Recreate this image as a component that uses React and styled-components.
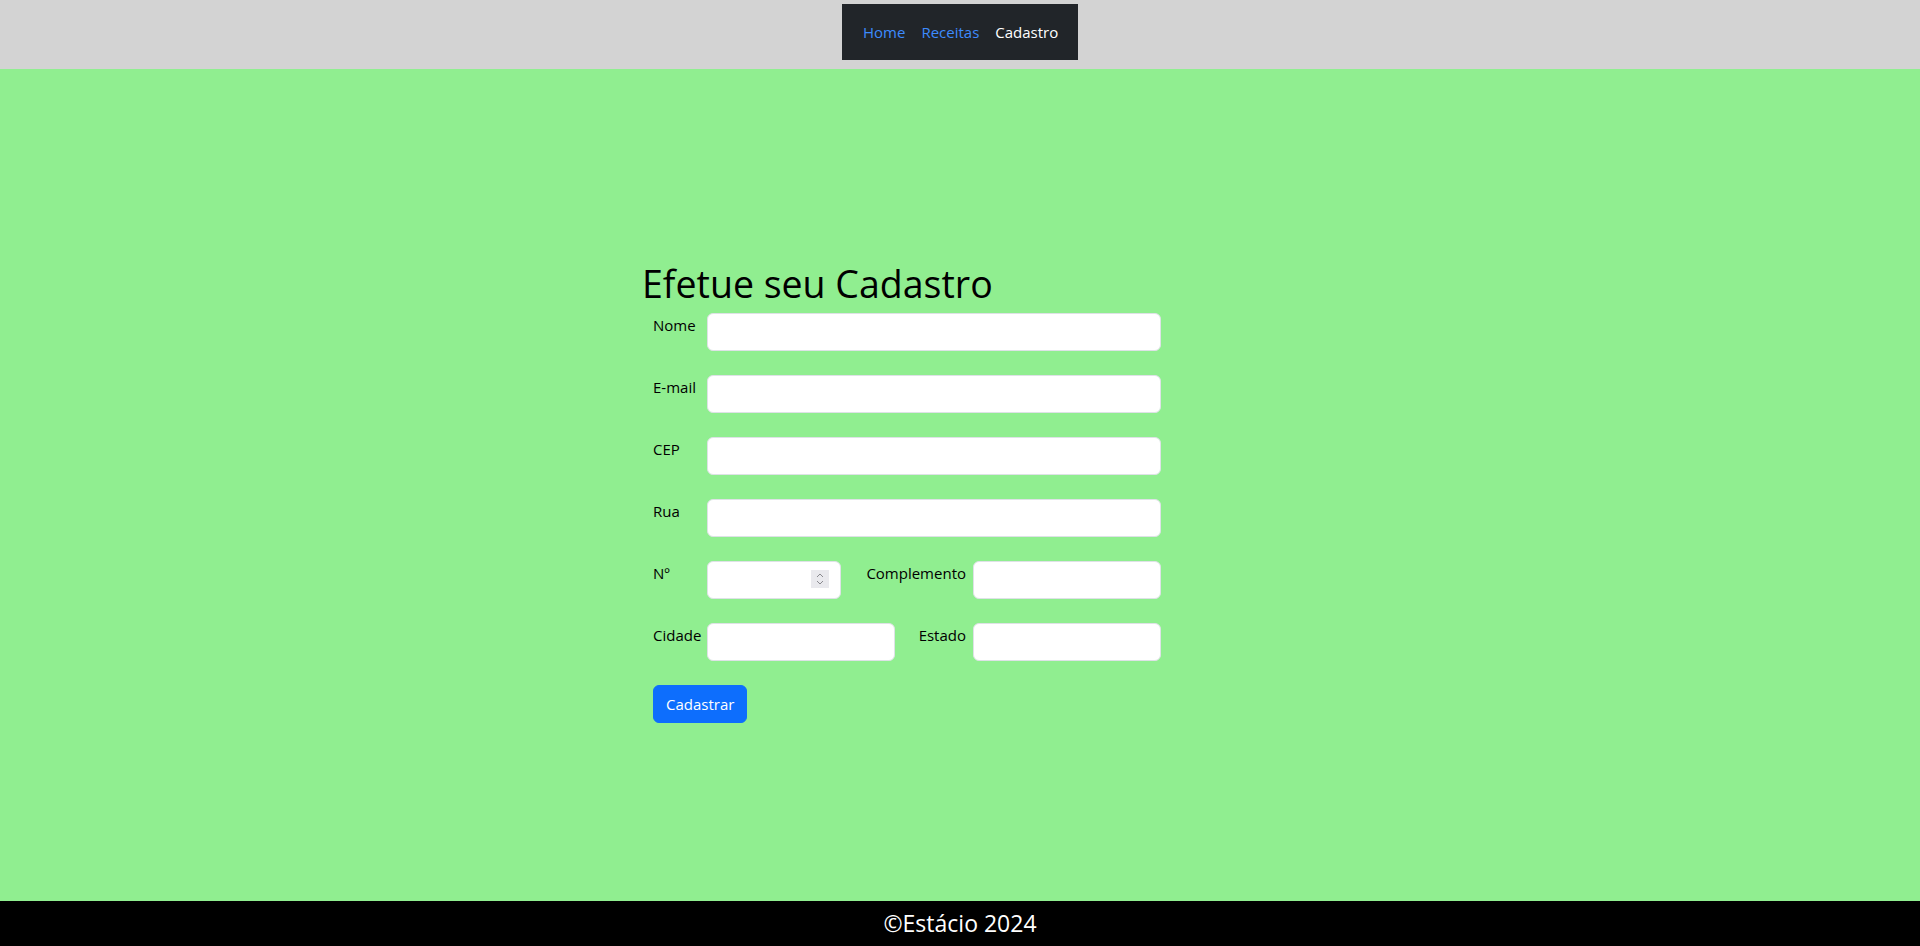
import React from "react";
import styled, { createGlobalStyle } from "styled-components";

const GlobalStyle = createGlobalStyle`
  html, body {
    margin: 0;
    padding: 0;
  }
  body {
    font-family: "Segoe UI", "Open Sans", "Noto Sans", sans-serif;
    font-size: 16px;
    line-height: 1.5;
    color: #212529;
  }
  * {
    box-sizing: border-box;
  }
`;

const Page = styled.div`
  display: flex;
  flex-direction: column;
  min-height: 946px;
`;

const Header = styled.header`
  background-color: #d3d3d3;
  display: flex;
  justify-content: center;
  padding: 4px 0 9px;
`;

const NavBox = styled.nav`
  background-color: #212529;
  width: 236px;
  height: 56px;
  display: flex;
  align-items: center;
  padding: 0 13px;
`;

const NavLink = styled.a`
  padding: 0 8px;
  color: ${(p) => (p.$active ? "#ffffff" : "#3d8bfd")};
  text-decoration: none;
  font-size: 15px;
  white-space: nowrap;
`;

const Main = styled.main`
  flex: 1;
  background-color: #90ee90;
  display: flex;
  flex-direction: column;
  justify-content: center;
  padding: 14px 0 0 642px;
`;

const Title = styled.h1`
  margin: 0 0 7px;
  font-size: 37.5px;
  font-weight: 400;
  line-height: 45px;
  color: #000;
`;

const Form = styled.form`
  width: 519px;
  padding-left: 11px;
`;

const Row = styled.div`
  display: flex;
  align-items: flex-start;
  height: 38px;
  margin-bottom: 24px;
`;

const Label = styled.label`
  width: 54px;
  flex-shrink: 0;
  line-height: 24px;
  font-size: 15px;
  color: #000;
  white-space: nowrap;
`;

const SideLabel = styled(Label)`
  width: auto;
  flex: 1;
  text-align: right;
  padding-right: 7px;
`;

const InputWrap = styled.div`
  position: relative;
  width: ${(p) => (p.$width ? `${p.$width}px` : "auto")};
  flex: ${(p) => (p.$width ? "none" : "1")};
`;

const Input = styled.input`
  display: block;
  width: 100%;
  height: 38px;
  border: 1px solid #dee2e6;
  border-radius: 6px;
  background: #fff;
  padding: 6px 12px;
  font-family: inherit;
  font-size: 16px;
  outline: none;
  -moz-appearance: textfield;
  &::-webkit-inner-spin-button,
  &::-webkit-outer-spin-button {
    -webkit-appearance: none;
    margin: 0;
  }
`;

const Spinner = styled.span`
  position: absolute;
  right: 12px;
  top: 9px;
  width: 18px;
  height: 18px;
  background: #e9e9ed;
  display: flex;
  align-items: center;
  justify-content: center;
`;

const Button = styled.button`
  background-color: #0d6efd;
  color: #fff;
  border: 1px solid #0d6efd;
  border-radius: 6px;
  height: 38px;
  padding: 0 12px;
  font-family: inherit;
  font-size: 15px;
  cursor: pointer;
`;

const Footer = styled.footer`
  background-color: #000;
  color: #fff;
  height: 45px;
  display: flex;
  align-items: center;
  justify-content: center;
  font-size: 23px;
`;

const Field = ({ width, spinner, type = "text" }) => (
  <InputWrap $width={width}>
    <Input type={type} />
    {spinner && (
      <Spinner>
        <svg width="10" height="14" viewBox="0 0 10 14">
          <path d="M2 5 L5 2 L8 5" fill="none" stroke="#8a8a8f" strokeWidth="1" />
          <path d="M2 9 L5 12 L8 9" fill="none" stroke="#8a8a8f" strokeWidth="1" />
        </svg>
      </Spinner>
    )}
  </InputWrap>
);

export default function App() {
  return (
    <Page>
      <GlobalStyle />
      <Header>
        <NavBox>
          <NavLink href="#">Home</NavLink>
          <NavLink href="#">Receitas</NavLink>
          <NavLink href="#" $active>Cadastro</NavLink>
        </NavBox>
      </Header>

      <Main>
        <Title>Efetue seu Cadastro</Title>
        <Form onSubmit={(e) => e.preventDefault()}>
          <Row>
            <Label>Nome</Label>
            <Field />
          </Row>
          <Row>
            <Label>E-mail</Label>
            <Field type="email" />
          </Row>
          <Row>
            <Label>CEP</Label>
            <Field />
          </Row>
          <Row>
            <Label>Rua</Label>
            <Field />
          </Row>
          <Row>
            <Label>Nº</Label>
            <Field width={134} type="number" spinner />
            <SideLabel>Complemento</SideLabel>
            <Field width={188} />
          </Row>
          <Row>
            <Label>Cidade</Label>
            <Field width={188} />
            <SideLabel>Estado</SideLabel>
            <Field width={188} />
          </Row>
          <Button type="submit">Cadastrar</Button>
        </Form>
      </Main>

      <Footer>©Estácio 2024</Footer>
    </Page>
  );
}
